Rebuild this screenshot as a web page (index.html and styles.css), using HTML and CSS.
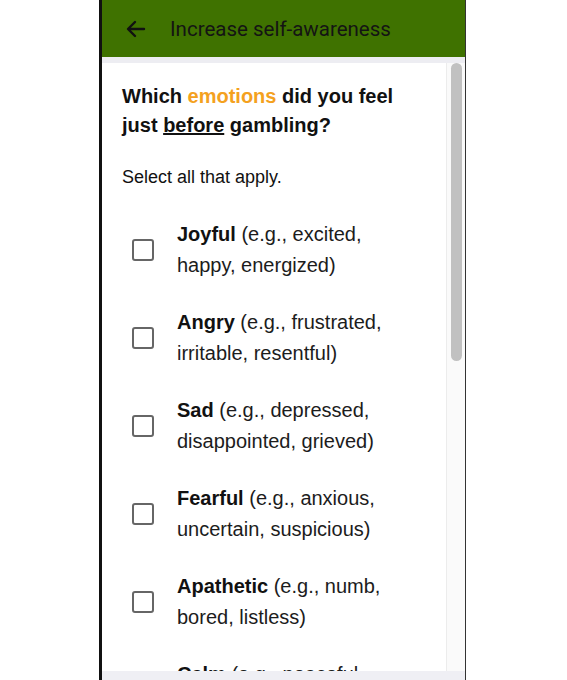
FILE: index.html
```html
<!DOCTYPE html>
<html lang="en">
<head>
    <meta charset="UTF-8">
    <meta name="viewport" content="width=device-width, initial-scale=1.0">
    <title>Increase self-awareness</title>
    <link rel="stylesheet" href="styles.css">
</head>
<body>
    <div class="device">
        <header class="topbar">
            <span class="back">
                <svg width="24" height="24" viewBox="0 0 24 24"><path d="M20 12H5M11 5l-7 7 7 7" fill="none" stroke="#111" stroke-width="2.4" stroke-linecap="round" stroke-linejoin="round"/></svg>
            </span>
            <span class="title">Increase self-awareness</span>
        </header>
        <div class="strip"></div>
        <div class="scroll-area">
            <div class="content">
                <h1 class="question">Which <span class="accent">emotions</span> did you feel just <u>before</u> gambling?</h1>
                <p class="hint">Select all that apply.</p>
                <ul class="options">
                    <li><span class="box"></span><span class="label"><b>Joyful</b> (e.g., excited, happy, energized)</span></li>
                    <li><span class="box"></span><span class="label"><b>Angry</b> (e.g., frustrated, irritable, resentful)</span></li>
                    <li><span class="box"></span><span class="label"><b>Sad</b> (e.g., depressed, disappointed, grieved)</span></li>
                    <li><span class="box"></span><span class="label"><b>Fearful</b> (e.g., anxious, uncertain, suspicious)</span></li>
                    <li><span class="box"></span><span class="label"><b>Apathetic</b> (e.g., numb, bored, listless)</span></li>
                    <li><span class="box"></span><span class="label"><b>Calm</b> (e.g., peaceful, relaxed, content)</span></li>
                </ul>
            </div>
            <div class="scrollbar">
                <div class="thumb"></div>
            </div>
        </div>
        <div class="bottom-bar"></div>
    </div>
</body>
</html>
```

FILE: styles.css
```css
body {
    margin: 0;
    background-color: #ffffff;
    font-family: "Liberation Sans", Arial, sans-serif;
}

.device {
    width: 363px;
    height: 680px;
    margin-left: 99px;
    border-left: 3px solid #111111;
    border-right: 1px solid #333333;
    display: flex;
    flex-direction: column;
    overflow: hidden;
}

.topbar {
    height: 57px;
    flex-shrink: 0;
    background-color: #3f7200;
    display: flex;
    align-items: center;
    padding-left: 22px;
    color: #141414;
}

.back {
    display: flex;
    width: 24px;
    height: 24px;
}

.title {
    margin-left: 22px;
    font-family: Roboto, "Liberation Sans", sans-serif;
    font-size: 20.5px;
}

.strip {
    height: 6px;
    flex-shrink: 0;
    background-color: #ededf2;
}

.scroll-area {
    flex: 1;
    display: flex;
    overflow: hidden;
}

.content {
    flex: 1;
    padding: 19px 20px 0 20px;
    overflow: hidden;
}

.question {
    margin: 0;
    font-size: 20px;
    line-height: 29px;
    font-weight: bold;
    color: #111111;
}

.accent {
    color: #f4a11e;
}

.hint {
    margin: 25px 0 0 0;
    font-size: 18px;
    line-height: 25px;
    color: #111111;
}

.options {
    list-style: none;
    margin: 29px 0 0 0;
    padding: 0;
}

.options li {
    display: flex;
    align-items: center;
    margin-bottom: 26px;
}

.box {
    width: 18px;
    height: 18px;
    border: 2px solid #666666;
    border-radius: 3px;
    margin-left: 10px;
    margin-right: 23px;
    flex-shrink: 0;
}

.label {
    font-size: 20px;
    line-height: 31px;
    color: #1c1c1c;
    width: 228px;
}

.label b {
    font-weight: bold;
    color: #111111;
}

.scrollbar {
    width: 18px;
    flex-shrink: 0;
    background-color: #fafafa;
    border-left: 1px solid #ececec;
}

.thumb {
    width: 11px;
    height: 298px;
    margin-left: 4px;
    background-color: #c1c1c1;
    border-radius: 6px;
}

.bottom-bar {
    height: 9px;
    flex-shrink: 0;
    background-color: #efeff4;
}
```
